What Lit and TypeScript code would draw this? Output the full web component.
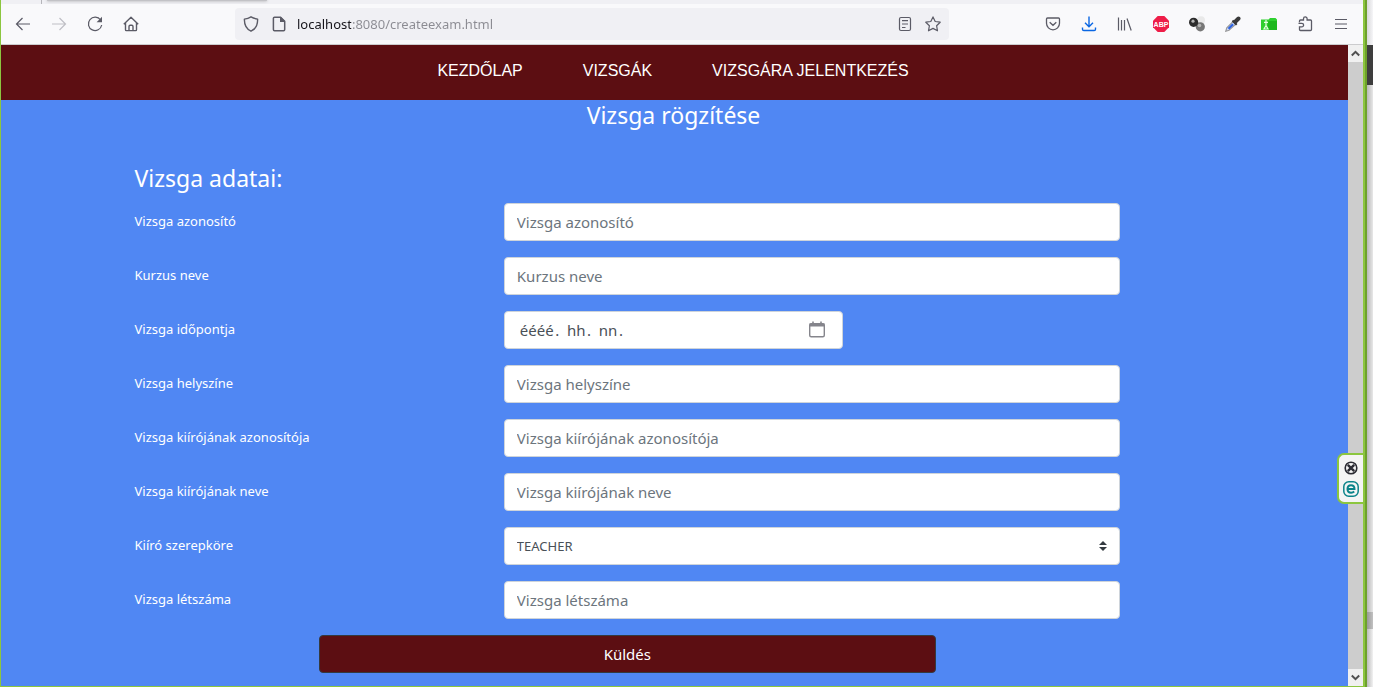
import { LitElement, html, css, svg } from "lit";
import { customElement, property } from "lit/decorators.js";

const icons = {
  back: svg`<path d="M15 8H1.5M7.5 2 1.5 8l6 6"/>`,
  forward: svg`<path d="M1 8h13.5M8.5 2l6 6-6 6"/>`,
  reload: svg`<path d="M13.6 4A6.7 6.7 0 1 0 14.7 9"/><path d="M15 .8v5.4H9.6z" fill="currentColor" stroke="none"/>`,
  home: svg`<path d="M.8 8.300 8 1.300l7.200 7M2.500 6.800v7c0 .5.300.8.8.8h9.400c.5 0 .8-.3.8-.8v-7M6 14.500V10.500c0-.7.500-1.200 1.200-1.200h1.600c.7 0 1.200.5 1.200 1.200v4" stroke-width="1.400" stroke-linejoin="round"/>`,
  shield: svg`<path d="M8 .8c2 1.200 4 1.900 6.600 2.300.2 5.900-1.800 10-6.600 12.100C3.200 13.100 1.200 9 1.400 3.100 4 2.700 6 2 8 .8z" stroke-width="1.400" stroke-linejoin="round"/>`,
  page: svg`<path d="M3.500 1.200h6l4.200 4.200v8.200c0 .7-.4 1.100-1.100 1.100H3.500c-.7 0-1.100-.4-1.100-1.100V2.300c0-.7.4-1.100 1.100-1.100z" stroke-width="1.500"/><path d="M9 1h1l4 4v1H9z" fill="currentColor" stroke="none"/>`,
  reader: svg`<rect x="2.500" y="1.500" width="11" height="13" rx="1.500"/><path d="M5 4.700h6M5 8h6M5 11.500h3.500"/>`,
  star: svg`<path d="m8 .9 2.200 4.600 5 .7-3.600 3.500.9 5.100L8 12.400l-4.500 2.400.9-5.100L.8 6.200l5-.7z" stroke-linejoin="round"/>`,
  pocket: svg`<path d="M2.500 2h11c.6 0 1 .4 1 1v4.300a6.500 6.500 0 0 1-13 0V3c0-.6.400-1 1-1zM4.700 6.200 8 9.300l3.300-3.100" stroke-width="1.300"/>`,
  download: svg`<g stroke="#0a67e3" stroke-width="1.400"><path d="M8 .5v10M4 6.800l4 4 4-4M1.500 11.500v1.700c0 .8.500 1.300 1.300 1.300h10.400c.8 0 1.300-.5 1.300-1.300v-1.700"/></g>`,
  library: svg`<path d="M1.500 1.500v13M4.500 4v10.500M7.500 4v10.500M10 2.500l4.200 12"/>`,
  block: svg`<path d="M4.700 0h6.600L16 4.700v6.600L11.300 16H4.700L0 11.300V4.700z" fill="#ee1d48" stroke="none"/><text x="8" y="10.700" text-anchor="middle" font-family="Liberation Sans, sans-serif" font-size="7" font-weight="700" fill="#fff" stroke="none">ABP</text>`,
  balls: svg`<g stroke="none"><circle cx="12" cy="4.200" r="4" fill="#e9e9e9"/><circle cx="11.300" cy="10.800" r="4.600" fill="#777"/><circle cx="10.500" cy="9.500" r="1.800" fill="#b5b5b5"/><circle cx="4.600" cy="6.300" r="4.600" fill="#2c2c2c"/><circle cx="4" cy="5.200" r="1.600" fill="#b5b5b5"/></g>`,
  picker: svg`<path d="m8 5.500 2.700 2.700L4 14.200.8 15.200l1-3.400z" fill="#c9d8ff" stroke="#999"/><path d="m3.500 12.700 4.500-4.500" stroke="#2e62e0" stroke-width="2.200"/><path d="m7.500 4.500 4.200 4.200" stroke="#333" stroke-width="2"/><path d="m10.500 5.500 3-3" stroke="#3a3a3a" stroke-width="4" stroke-linecap="round"/>`,
  folder: svg`<path d="M0 3.500h7.500L9 2h5.500L16 3.500V14H0z" fill="#2fd02f" stroke="none"/><path d="M7.500 5H16v9H6z" fill="#1eb81e" stroke="none"/><path d="M5 4v5M3 6.300h4M5 9.500l-2 3.500h4z" stroke="#e4ffe0"/>`,
  puzzle: svg`<path d="M2.500 6.300V5c0-.6.400-1 1-1h3V2.700a1.800 1.800 0 0 1 3.600 0V4h3.400c.6 0 1 .4 1 1v8.500c0 .6-.4 1-1 1h-10c-.6 0-1-.4-1-1v-2.600h2.300a1.800 1.800 0 0 0 0-3.600H1.500" stroke-width="1.300"/>`,
  menu: svg`<path d="M2 3.500h12M2 8h12M2 12.500h12"/>`,
};

type IconName = keyof typeof icons;

const glyph = (name: IconName) => html`
  <svg width="16" height="16" viewBox="0 0 16 16" fill="none" stroke="currentColor" stroke-width="1.200" aria-hidden="true">
    ${icons[name]}
  </svg>
`;

@customElement("browser-toolbar")
class BrowserToolbar extends LitElement {
  static styles = css`
    :host {
      display: block;
      background: #f9f9fb;
      color: #5b5b66;
      border-bottom: 1px solid #ccccce;
      font-family: "Noto Sans", sans-serif;
    }
    .tabs {
      height: 4px;
      background: #f0f0f4;
      display: flex;
      overflow: hidden;
    }
    .divider {
      width: 40px;
      border-right: 1px solid #b5b5ba;
    }
    .tab {
      width: 220px;
      height: 1px;
      margin-left: 5px;
      border-radius: 4px;
      background: #c2c2c6;
      box-shadow: 0 0 3px #777;
    }
    .bar {
      display: flex;
      align-items: center;
      height: 40px;
      padding: 0 4px;
    }
    button {
      display: grid;
      place-items: center;
      width: 36px;
      height: 32px;
      padding: 0;
      border: 0;
      background: none;
      color: inherit;
    }
    button:disabled {
      color: #bfbfc5;
    }
    .address {
      flex: 1;
      display: flex;
      align-items: center;
      height: 32px;
      margin: 0 86px;
      padding: 0 2px;
      border-radius: 4px;
      background: #f0f0f4;
    }
    .address button {
      width: 28px;
    }
    input {
      flex: 1;
      min-width: 0;
      margin: 0;
      padding: 0 4px;
      border: 0;
      outline: 0;
      font: 13px/24px "Noto Sans", sans-serif;
      color: transparent;
      background: linear-gradient(90deg, #15141a 58px, #8b8b92 58px);
      -webkit-background-clip: text;
      background-clip: text;
    }
  `;

  private button(name: IconName, label: string, disabled = false) {
    return html`<button type="button" aria-label=${label} ?disabled=${disabled}>${glyph(name)}</button>`;
  }

  render() {
    return html`
      <div class="tabs"><div class="divider"></div><div class="tab"></div></div>
      <div class="bar">
        ${this.button("back", "Vissza")} ${this.button("forward", "Előre", true)}
        ${this.button("reload", "Frissítés")} ${this.button("home", "Kezdőoldal")}
        <div class="address">
          ${this.button("shield", "Védelem")} ${this.button("page", "Webhely adatai")}
          <input aria-label="Cím" value="localhost:8080/createexam.html" />
          ${this.button("reader", "Olvasó nézet")} ${this.button("star", "Könyvjelző")}
        </div>
        ${this.button("pocket", "Pocket")} ${this.button("download", "Letöltések")}
        ${this.button("library", "Könyvtár")} ${this.button("block", "Adblock Plus")}
        ${this.button("balls", "Kiegészítő")} ${this.button("picker", "Színválasztó")}
        ${this.button("folder", "Mappa")} ${this.button("puzzle", "Kiegészítők")}
        ${this.button("menu", "Menü")}
      </div>
    `;
  }
}

interface Field {
  id: string;
  label: string;
  kind?: "date" | "role";
}

const fields: Field[] = [
  { id: "exam-id", label: "Vizsga azonosító" },
  { id: "course", label: "Kurzus neve" },
  { id: "date", label: "Vizsga időpontja", kind: "date" },
  { id: "place", label: "Vizsga helyszíne" },
  { id: "owner-id", label: "Vizsga kiírójának azonosítója" },
  { id: "owner-name", label: "Vizsga kiírójának neve" },
  { id: "role", label: "Kiíró szerepköre", kind: "role" },
  { id: "headcount", label: "Vizsga létszáma" },
];

@customElement("exam-form")
class ExamForm extends LitElement {
  @property({ attribute: false }) fields: Field[] = [];

  static styles = css`
    :host {
      display: block;
      padding-right: 2px;
      color: #fff;
      font-family: "Noto Sans", sans-serif;
    }
    * {
      box-sizing: border-box;
    }
    h1,
    h2 {
      margin: 0;
      font-size: 23px;
      line-height: 30px;
      font-weight: 400;
    }
    h1 {
      text-align: center;
    }
    h2 {
      padding: 0 15px;
      margin: 33px 0 10px;
    }
    form {
      max-width: 1108px;
      margin: 0 auto;
    }
    .row {
      display: grid;
      grid-template-columns: repeat(12, 1fr);
      margin-bottom: 16px;
    }
    .row:last-child {
      margin-bottom: 0;
    }
    label {
      grid-column: span 4;
      padding: 7px 15px;
      font-size: 13px;
      line-height: 22px;
    }
    .cell {
      grid-column: span 7;
      padding: 0 15px;
    }
    .cell.short {
      grid-column: span 4;
    }
    .cell.action {
      grid-column: 3 / span 7;
    }
    .box {
      display: flex;
      align-items: center;
      height: 38px;
      border: 1px solid #ced4da;
      border-radius: 4px;
      background: #fff;
      color: #495057;
    }
    input,
    select {
      flex: 1;
      min-width: 0;
      height: 36px;
      margin: 0;
      padding: 0 12px;
      border: 0;
      outline: 0;
      background: none;
      color: #495057;
      font-family: inherit;
      font-size: 15px;
    }
    input::placeholder {
      color: #6c757d;
      opacity: 1;
    }
    .short input {
      padding-left: 15px;
    }
    .short input::placeholder {
      color: #495057;
    }
    select {
      appearance: none;
      font-size: 13px;
    }
    .arrows {
      margin-right: 12px;
      pointer-events: none;
    }
    .calendar {
      display: grid;
      margin-right: 16px;
      padding: 0;
      border: 0;
      background: none;
      color: #85858c;
    }
    .submit {
      display: block;
      width: 100%;
      height: 38px;
      border: 1px solid #343a40;
      border-radius: 4px;
      background: #5c0e12;
      color: #fff;
      font-family: inherit;
      font-size: 15px;
    }
  `;

  private control(field: Field) {
    if (field.kind === "date") {
      return html`
        <input id=${field.id} placeholder="éééé&#8202;.  hh&#8202;.  nn&#8202;." />
        <button class="calendar" type="button" aria-label="Naptár">
          <svg width="18" height="18" viewBox="0 0 18 18" fill="none" stroke="currentColor" aria-hidden="true">
            <rect x="1.700" y="2.700" width="14.600" height="13" rx="1.500" stroke-width="1.400" />
            <path d="M1.500 4h15" stroke-width="3" />
            <path d="M5 .5V3M13 .5V3" stroke-width="1.600" />
          </svg>
        </button>
      `;
    }
    if (field.kind === "role") {
      return html`
        <select id=${field.id}>
          <option>TEACHER</option>
        </select>
        <svg class="arrows" width="8" height="10" viewBox="0 0 8 10" aria-hidden="true">
          <path d="M4 0l4 4H0zM0 6h8l-4 4z" fill="#343a40" />
        </svg>
      `;
    }
    return html`<input id=${field.id} placeholder=${field.label} />`;
  }

  render() {
    return html`
      <h1>Vizsga rögzítése</h1>
      <form @submit=${(e: Event) => e.preventDefault()}>
        <h2>Vizsga adatai:</h2>
        ${this.fields.map(
          (f) => html`
            <div class="row">
              <label for=${f.id}>${f.label}</label>
              <div class="cell ${f.kind === "date" ? "short" : ""}">
                <div class="box">${this.control(f)}</div>
              </div>
            </div>
          `
        )}
        <div class="row">
          <div class="cell action"><button class="submit">Küldés</button></div>
        </div>
      </form>
    `;
  }
}

@customElement("app-root")
class AppRoot extends LitElement {
  static styles = css`
    :host {
      display: grid;
      grid-template-columns: 1fr 6px;
      min-height: 100vh;
    }
    .window {
      position: relative;
      display: flex;
      flex-direction: column;
      border: 0 solid #8cc63f;
      border-width: 0 2px 1px 1px;
      box-shadow: 2px 0 #6ea02d;
      margin-right: 2px;
      background: #5087f3;
    }
    .body {
      flex: 1;
      display: grid;
      grid-template-columns: 1fr 15px;
    }
    nav {
      display: flex;
      justify-content: center;
      gap: 60px;
      padding: 14px 3px 17px 0;
      background: #5c0e12;
      font: 16px/24px "Liberation Sans", sans-serif;
    }
    nav a {
      color: #fff;
      text-decoration: none;
    }
    .scroll {
      display: flex;
      flex-direction: column;
      justify-content: space-between;
      background: #cdcdcd;
    }
    .scroll button {
      display: grid;
      place-items: center;
      height: 17px;
      padding: 0;
      border: 0;
      background: #f0f0f0;
    }
    .widget {
      position: absolute;
      right: 0;
      top: 453px;
      display: flex;
      flex-direction: column;
      align-items: center;
      justify-content: center;
      gap: 4px;
      box-sizing: border-box;
      width: 26px;
      height: 51px;
      border: 2px solid #8cc63f;
      border-right: 0;
      border-radius: 7px 0 0 7px;
      background: #f4f4f4;
    }
    .widget button {
      display: grid;
      padding: 0;
      border: 0;
      background: none;
    }
    .desk {
      display: flex;
      flex-direction: column;
      background: linear-gradient(90deg, #b8b8b8, #e8e8e8);
    }
    .sky {
      height: 45px;
      background: linear-gradient(90deg, #d8d8da, #f6f6f8);
    }
    .shade {
      height: 40px;
      background: #3e3e3e;
    }
    .gap {
      flex: 1;
    }
    .thumb {
      height: 17px;
      background: linear-gradient(90deg, #999, #c2c2c2);
    }
    .foot {
      height: 58px;
      background: linear-gradient(90deg, #bcbcbc, #f2f2f2);
    }
  `;

  private arrow(d: string, label: string) {
    return html`<button type="button" aria-label=${label}>
      <svg width="9" height="7" viewBox="0 0 9 7" fill="none" stroke="#505050" stroke-width="2"><path d=${d} /></svg>
    </button>`;
  }

  render() {
    return html`
      <div class="window">
        <browser-toolbar></browser-toolbar>
        <div class="body">
          <main>
            <nav>
              <a href="#home">KEZDŐLAP</a>
              <a href="#exams">VIZSGÁK</a>
              <a href="#apply">VIZSGÁRA JELENTKEZÉS</a>
            </nav>
            <exam-form .fields=${fields}></exam-form>
          </main>
          <div class="scroll">
            ${this.arrow("M.8 5.500 4.500 1.800l3.700 3.700", "Fel")} ${this.arrow("M.8 1.500l3.700 3.700L8.200 1.500", "Le")}
          </div>
        </div>
        <div class="widget">
          <button type="button" aria-label="Bezárás">
            <svg width="16" height="16" viewBox="0 0 16 16">
              <circle cx="8" cy="8" r="5.800" fill="none" stroke="#2b2b33" stroke-width="1.600" />
              <path d="m4.800 4.800 6.400 6.400M11.200 4.800l-6.400 6.400" stroke="#2b2b33" stroke-width="2.400" />
            </svg>
          </button>
          <button type="button" aria-label="Megnyitás">
            <svg width="18" height="18" viewBox="0 0 18 18" fill="none" stroke="#0b8389">
              <rect x="1.800" y="1.800" width="14.400" height="14.400" rx="5" stroke-width="1.500" />
              <path d="M5.500 9h7c0-2.300-1.300-3.700-3.500-3.700S5.500 6.800 5.500 9s1.400 3.700 3.600 3.700c1.300 0 2.300-.4 3.100-1.200" stroke-width="2" />
            </svg>
          </button>
        </div>
      </div>
      <div class="desk">
        <div class="sky"></div>
        <div class="shade"></div>
        <div class="gap"></div>
        <div class="thumb"></div>
        <div class="foot"></div>
      </div>
    `;
  }
}
